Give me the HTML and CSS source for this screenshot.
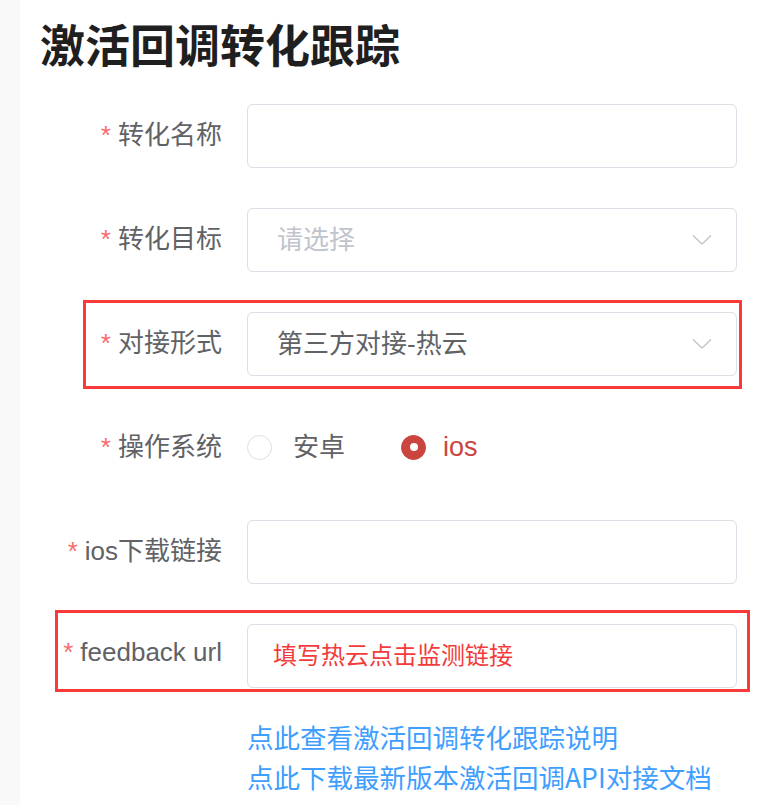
FILE: index.html
```html
<!DOCTYPE html>
<html lang="zh-CN">
<head>
<meta charset="utf-8">
<title>激活回调转化跟踪</title>
<link rel="stylesheet" href="styles.css">
</head>
<body>
<div class="page">
  <aside class="strip"></aside>
  <main class="content">
    <h1 class="title">激活回调转化跟踪</h1>
    <div class="form">
      <div class="row">
        <label class="label"><span class="req">*</span>转化名称</label>
        <div class="input"></div>
      </div>
      <div class="row">
        <label class="label"><span class="req">*</span>转化目标</label>
        <div class="input select">
          <span class="placeholder">请选择</span>
          <svg class="chev" width="20" height="12" viewBox="0 0 20 12"><path d="M1 1.5 L10 10 L19 1.5" fill="none" stroke="#c0c4cc" stroke-width="1.3"/></svg>
        </div>
      </div>
      <div class="row">
        <label class="label"><span class="req">*</span>对接形式</label>
        <div class="input select">
          <span class="value">第三方对接-热云</span>
          <svg class="chev" width="20" height="12" viewBox="0 0 20 12"><path d="M1 1.5 L10 10 L19 1.5" fill="none" stroke="#c0c4cc" stroke-width="1.3"/></svg>
        </div>
        <div class="mark mark-a"></div>
      </div>
      <div class="row">
        <label class="label"><span class="req">*</span>操作系统</label>
        <div class="radios">
          <span class="radio"><span class="dot"></span><span class="rtext">安卓</span></span>
          <span class="radio checked"><span class="dot"></span><span class="rtext">ios</span></span>
        </div>
      </div>
      <div class="row">
        <label class="label"><span class="req">*</span>ios下载链接</label>
        <div class="input"></div>
      </div>
      <div class="row">
        <label class="label"><span class="req">*</span>feedback url</label>
        <div class="input"><span class="hint">填写热云点击监测链接</span></div>
        <div class="mark mark-b"></div>
      </div>
      <div class="links">
        <a class="link">点此查看激活回调转化跟踪说明</a>
        <a class="link">点此下载最新版本激活回调API对接文档</a>
      </div>
    </div>
  </main>
</div>
</body>
</html>
```

FILE: styles.css
```css
html, body {
  margin: 0;
  padding: 0;
  background: #ffffff;
}

body {
  font-family: "Liberation Sans", "Noto Sans CJK SC", sans-serif;
  color: #606266;
}

.page {
  display: flex;
  min-height: 805px;
}

.strip {
  width: 20px;
  flex: none;
  background: #f9f9f9;
}

.content {
  flex: 1;
  padding-left: 20px;
}

.title {
  margin: 0;
  padding-top: 14px;
  height: 60px;
  line-height: 60px;
  font-size: 45px;
  font-weight: bold;
  color: #1f1f1f;
  font-family: "Noto Sans CJK SC", sans-serif;
}

.form {
  margin-top: 30px;
  width: 697px;
}

.row {
  position: relative;
  display: grid;
  grid-template-columns: 207px 490px;
  align-items: center;
  height: 64px;
  margin-bottom: 40px;
}

.label {
  text-align: right;
  padding-right: 25px;
  padding-bottom: 7px;
  font-size: 26px;
  color: #606266;
  white-space: nowrap;
}

.req {
  color: #f56c6c;
  margin-right: 7px;
}

.input {
  box-sizing: border-box;
  height: 64px;
  border: 1px solid #dcdfe6;
  border-radius: 6px;
  display: flex;
  align-items: center;
  padding: 0 24px 5px 29px;
  font-size: 26px;
  background: #fff;
}

.select {
  justify-content: space-between;
}

.placeholder {
  color: #c0c4cc;
}

.value {
  color: #606266;
}

.hint {
  color: #f43b3b;
  font-size: 24px;
  margin-left: -4px;
}

.chev {
  display: block;
  margin-top: 5px;
}

.radios {
  display: flex;
  align-items: center;
  padding-bottom: 2px;
}

.radio {
  display: flex;
  align-items: center;
  margin-right: 56px;
  font-size: 26px;
}

.dot {
  box-sizing: border-box;
  width: 25px;
  height: 25px;
  border-radius: 50%;
  border: 1.5px solid #dcdfe6;
  background: #fff;
  position: relative;
}

.rtext {
  margin-left: 21px;
  color: #606266;
  padding-bottom: 5px;
}

.radio.checked .dot {
  border-color: #c9453e;
  background: #c9453e;
}

.radio.checked .dot::after {
  content: "";
  position: absolute;
  left: 50%;
  top: 50%;
  width: 8px;
  height: 8px;
  margin: -4px 0 0 -4px;
  border-radius: 50%;
  background: #fff;
}

.radio.checked .rtext {
  color: #c9453e;
  margin-left: 17px;
  font-size: 27px;
  padding-bottom: 0;
}

.mark {
  position: absolute;
  box-sizing: border-box;
  border: 3px solid #f83a3a;
  pointer-events: none;
}

.mark-a {
  left: 43px;
  top: -12px;
  width: 659px;
  height: 89px;
}

.mark-b {
  left: 15px;
  top: -14px;
  width: 695px;
  height: 82px;
}

.links {
  margin-top: -11px;
  padding-left: 207px;
  display: flex;
  flex-direction: column;
}

.link {
  font-size: 26.5px;
  line-height: 40px;
  color: #409eff;
  font-family: "Noto Sans CJK SC", sans-serif;
  white-space: nowrap;
}
```
